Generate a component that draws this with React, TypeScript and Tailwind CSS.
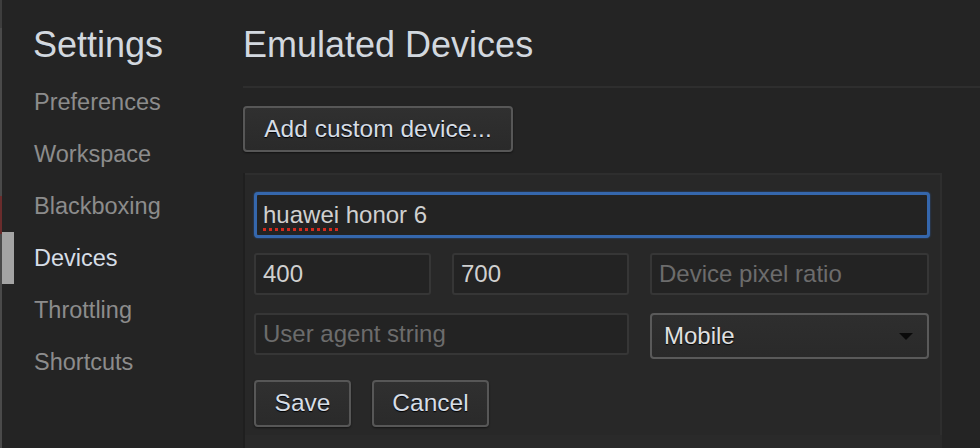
import { ReactNode } from 'react';

const navItems = ['Preferences', 'Workspace', 'Blackboxing', 'Devices', 'Throttling', 'Shortcuts'];

const NavItem = ({ label, active }: { label: string; active: boolean }) => (
  <div className="flex h-[52px] items-stretch">
    <span className={active ? 'w-[12px] bg-[#a4a4a4]' : 'w-[12px]'} />
    <span
      className={`ml-[20px] text-[23.5px] leading-[52px] ${
        active ? 'text-[#d6dde6]' : 'text-[#8c8c8c]'
      }`}
    >
      {label}
    </span>
  </div>
);

const Field = ({
  value,
  placeholder,
  className = '',
}: {
  value?: ReactNode;
  placeholder?: string;
  className?: string;
}) => (
  <div
    className={`flex h-[42px] items-center rounded-[3px] border-2 border-[#363636] bg-[#232323] px-[7px] text-[24px] ${className}`}
  >
    {value ? (
      <span className="text-[#d0d0d0]">{value}</span>
    ) : (
      <span className="text-[#6c6c6c]">{placeholder}</span>
    )}
  </div>
);

const Button = ({ label, className = '' }: { label: string; className?: string }) => (
  <div
    className={`flex items-center justify-center rounded-[4px] border-2 border-[#575757] bg-gradient-to-b from-[#303030] to-[#2a2a2a] text-[24.5px] text-[#d6dde6] shadow-[0_1px_2px_rgba(0,0,0,0.5)] [text-shadow:0_1px_1px_#000] ${className}`}
  >
    {label}
  </div>
);

const App = () => {
  return (
    <div className="flex h-[448px] w-[980px] overflow-hidden bg-[#242424] font-['Liberation_Sans',Arial,sans-serif]">
      {/* window edge behind */}
      <div className="flex w-[2px] flex-col">
        <div className="h-[28px] bg-[#3e3e3e]" />
        <div className="h-[168px] bg-[#4a4a4a]" />
        <div className="h-[38px] bg-[#6a2c2c]" />
        <div className="flex-1 bg-[#4a4a4a]" />
      </div>

      <aside className="flex w-[241px] flex-col pt-[23px]">
        <h1 className="mb-[9px] ml-[31px] text-[36px] leading-[44px] text-[#d2d8df]">Settings</h1>
        {navItems.map((item) => (
          <NavItem key={item} label={item} active={item === 'Devices'} />
        ))}
      </aside>

      <main className="flex flex-1 flex-col pt-[23px]">
        <h2 className="text-[36px] leading-[44px] text-[#d2d8df]">Emulated Devices</h2>
        <div className="mt-[19px] h-[2px] bg-[#2e2e2e]" />
        <Button label="Add custom device..." className="mt-[18px] h-[46px] w-[270px]" />

        <section className="mt-[21px] flex w-[699px] flex-1 flex-col border-l-2 border-[#1f1f1f] bg-[#282828]">
          <div className="border-r-2 border-t-2 border-[#2e2e2e] pb-[8px] pl-[9px] pr-[10px] pt-[17px]">
            <div className="flex h-[46px] items-center rounded-[4px] border-[3px] border-[#3567ad] bg-[#232323] px-[6px] text-[24px] text-[#d0d0d0] shadow-[0_0_2px_#2a5a9c]">
              <span className="underline decoration-[#d42a1e] decoration-dotted decoration-[3px] underline-offset-[5px]">
                huawei
              </span>
              <span className="whitespace-pre"> honor 6</span>
            </div>

            <div className="mt-[15px] grid grid-cols-[177px_177px_279px] items-start gap-x-[21px] gap-y-[18px]">
              <Field value="400" />
              <Field value="700" />
              <Field placeholder="Device pixel ratio" />
              <Field placeholder="User agent string" className="col-span-2" />
              <div className="flex h-[46px] items-center justify-between rounded-[4px] border-2 border-[#5a5a5a] bg-gradient-to-b from-[#2e2e2e] to-[#2a2a2a] pl-[12px] pr-[14px] text-[24px] text-[#e0e0e0] [text-shadow:0_1px_1px_#000]">
                <span>Mobile</span>
                <svg width="14" height="7" viewBox="0 0 14 7">
                  <path d="M0 0h14L7 7z" fill="#0a0a0a" />
                </svg>
              </div>
            </div>

            <div className="mt-[21px] flex gap-[21px]">
              <Button label="Save" className="h-[47px] w-[97px]" />
              <Button label="Cancel" className="h-[47px] w-[117px]" />
            </div>
          </div>
          <div className="flex-1 bg-[#2a2a2a]" />
        </section>
      </main>
    </div>
  );
};

export default App;
